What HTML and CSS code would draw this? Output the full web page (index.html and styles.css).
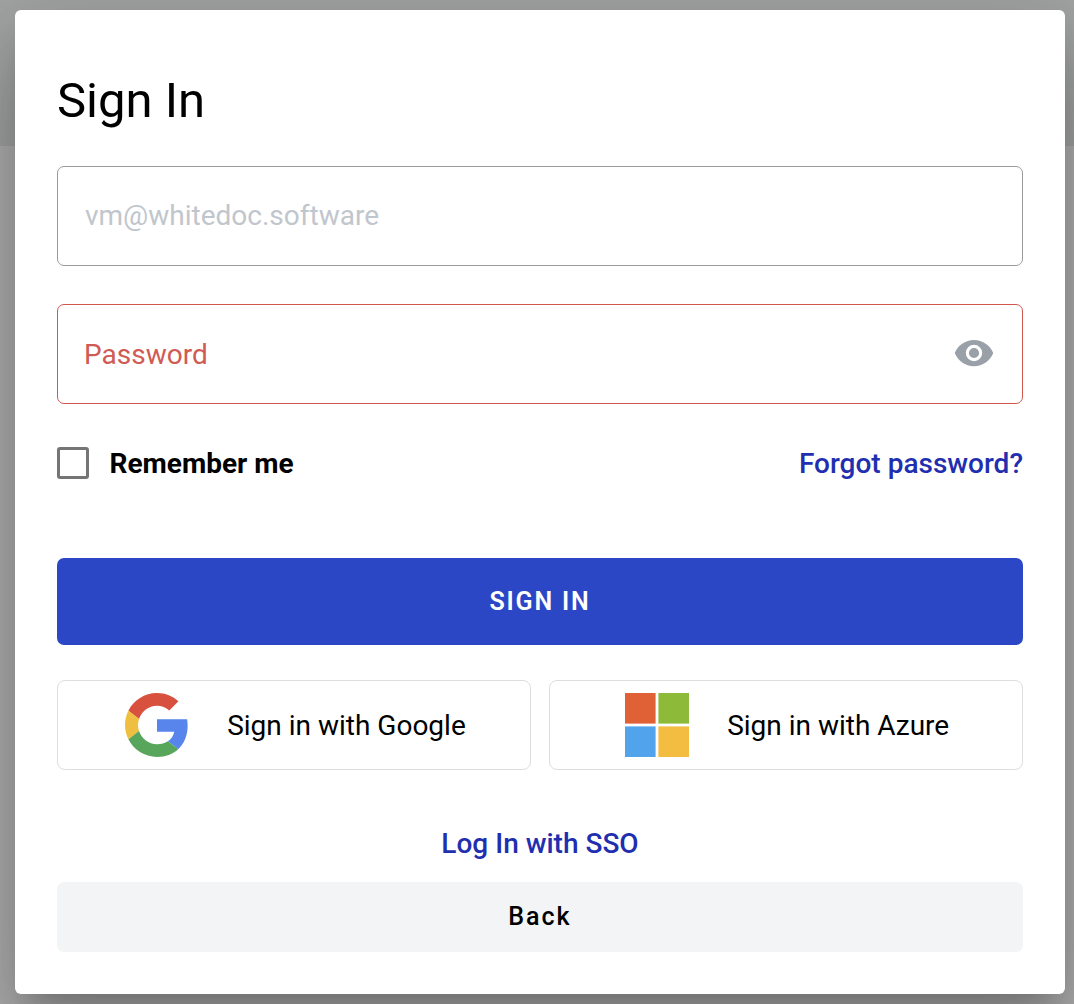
FILE: index.html
```html
<!DOCTYPE html>
<html lang="en">
<head>
<meta charset="utf-8">
<title>Sign In</title>
<link rel="stylesheet" href="styles.css">
</head>
<body>
<main class="dialog">
  <h1 class="title">Sign In</h1>
  <div class="field"><span class="field-text">vm@whitedoc.software</span></div>
  <div class="field field-error">
    <span class="field-text">Password</span>
    <svg class="eye" viewBox="0 0 24 24"><path d="M12 4.5C7 4.5 2.73 7.61 1 12c1.73 4.39 6 7.5 11 7.5s9.27-3.11 11-7.5c-1.73-4.39-6-7.5-11-7.5zM12 16.7a4.7 4.7 0 1 1 0-9.4 4.7 4.7 0 0 1 0 9.4zm0-7.6a2.9 2.9 0 1 0 0 5.8 2.9 2.9 0 0 0 0-5.8z"/></svg>
  </div>
  <div class="options">
    <label class="remember"><span class="checkbox"></span><span class="remember-text">Remember me</span></label>
    <a class="link">Forgot password?</a>
  </div>
  <button class="submit">SIGN IN</button>
  <div class="providers">
    <button class="provider google">
      <svg class="logo" viewBox="0 0 48 48">
        <path fill="#d8513f" d="M24 9.5c3.54 0 6.71 1.22 9.21 3.6l6.85-6.85C35.9 2.38 30.47 0 24 0 14.62 0 6.51 5.38 2.56 13.22l7.98 6.19C12.43 13.72 17.74 9.5 24 9.5z"/>
        <path fill="#5785ec" d="M46.98 24.55c0-1.57-.15-3.09-.38-4.91H24v9.38h12.94c-.58 2.96-2.26 5.48-4.78 7.18l7.73 6c4.51-4.18 7.09-10.36 7.09-17.65z"/>
        <path fill="#efbf41" d="M10.53 28.59c-.48-1.45-.76-2.99-.76-4.59s.27-3.14.76-4.59l-7.98-6.19C.92 16.46 0 20.12 0 24c0 3.88.92 7.54 2.56 10.78l7.97-6.19z"/>
        <path fill="#58a55c" d="M24 48c6.48 0 11.93-2.13 15.89-5.81l-7.73-6c-2.15 1.45-4.92 2.3-8.16 2.3-6.26 0-11.57-4.22-13.47-9.91l-7.98 6.19C6.51 42.62 14.62 48 24 48z"/>
      </svg>
      <span class="provider-text">Sign in with Google</span>
    </button>
    <button class="provider azure">
      <svg class="logo" viewBox="0 0 64 64">
        <path fill="#e06136" d="M0 0h30.6v30.6H0z"/>
        <path fill="#8eba3a" d="M33.4 0H64v30.6H33.4z"/>
        <path fill="#51a3eb" d="M0 33.4h30.6V64H0z"/>
        <path fill="#f3bd41" d="M33.4 33.4H64V64H33.4z"/>
      </svg>
      <span class="provider-text">Sign in with Azure</span>
    </button>
  </div>
  <a class="link sso">Log In with SSO</a>
  <button class="back">Back</button>
</main>
</body>
</html>
```
FILE: styles.css
```css
* { box-sizing: border-box; }

body {
  margin: 0;
  height: 1004px;
  overflow: hidden;
  padding: 10px 9px 10px 15px;
  background: linear-gradient(#a3a5a4 60px, #9fa2a1 146px, #aeaeae 146px);
  font: 400 28px/32px Roboto, sans-serif;
  color: #000;
}

.dialog {
  display: flex;
  flex-direction: column;
  height: 984px;
  padding: 59px 42px 42px;
  border-radius: 6px;
  background: #fff;
  box-shadow: 0 22px 30px -14px rgba(0, 0, 0, .2), 0 48px 76px 6px rgba(0, 0, 0, .14), 0 18px 92px 16px rgba(0, 0, 0, .12);
}

.title {
  margin: 0 0 33px;
  font-size: 49px;
  font-weight: 400;
  line-height: 64px;
}

.field {
  display: flex;
  align-items: center;
  justify-content: space-between;
  height: 100px;
  margin-bottom: 38px;
  padding: 0 27px;
  border: 1px solid #999b9d;
  border-radius: 7px;
  color: #c1c6cd;
}

.field-error {
  margin-bottom: 43px;
  padding-left: 26px;
  border-color: #d0564e;
  color: #cf5b54;
}

.field-error .field-text { padding-top: 2px; }

.eye {
  width: 42px;
  height: 42px;
  margin-bottom: 2px;
  fill: #9aa0a8;
}

.options {
  display: flex;
  align-items: center;
  justify-content: space-between;
  height: 32px;
  margin-bottom: 79px;
}

.options .link { padding-top: 2px; }

.remember {
  display: flex;
  gap: 20.5px;
  font-weight: 700;
}

.remember-text { margin: 1px 0 -1px; }

.checkbox {
  width: 32px;
  height: 32px;
  border: 3px solid #757575;
  border-radius: 3px;
}

.link {
  color: #1f2fb0;
  font-weight: 500;
}

button {
  border: 0;
  padding: 0;
  border-radius: 7px;
  font: inherit;
  color: inherit;
}

.submit {
  height: 87px;
  margin-bottom: 35px;
  background: #2b47c6;
  color: #fff;
  font-size: 25px;
  font-weight: 600;
  letter-spacing: 1.8px;
}

.providers {
  display: grid;
  grid-template-columns: 1fr 1fr;
  gap: 18px;
  height: 90px;
  margin-bottom: 58px;
}

.provider {
  display: flex;
  align-items: center;
  gap: 38.2px;
  padding-left: 67px;
  border: 1px solid #dedede;
  border-radius: 8px;
  background: #fff;
}

.azure { padding-left: 75px; }

.provider-text { padding-top: 2px; }

.logo {
  width: 64px;
  height: 64px;
}

.sso {
  align-self: center;
  margin-bottom: 22px;
}

.back {
  height: 70px;
  padding-bottom: 1px;
  background: #f3f4f6;
  font-size: 25px;
  font-weight: 500;
  letter-spacing: 2px;
}
```
